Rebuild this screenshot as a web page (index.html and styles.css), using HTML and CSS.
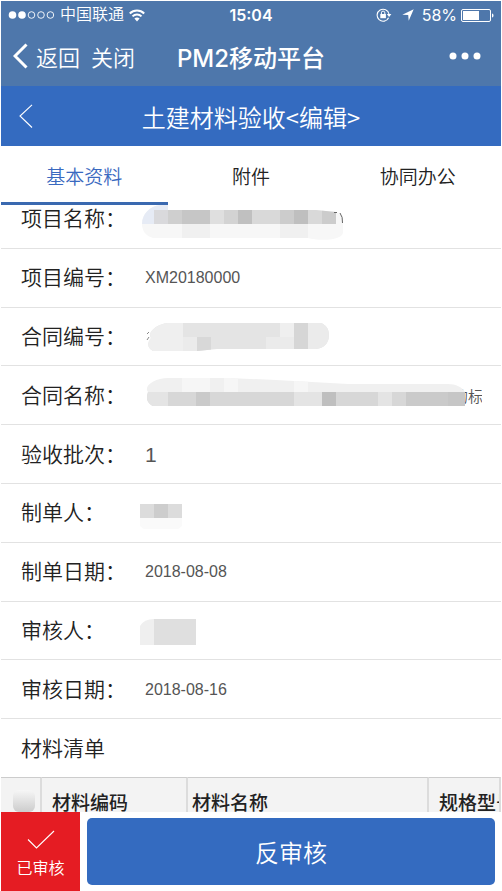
FILE: index.html
```html
<!DOCTYPE html>
<html lang="zh-CN">
<head>
<meta charset="utf-8">
<meta name="viewport" content="width=device-width, initial-scale=1">
<title>PM2移动平台</title>
<link rel="stylesheet" href="styles.css">
</head>
<body>
<div class="app">
  <header class="top">
    <div class="status">
      <div class="status-left">
        <svg width="47" height="10" viewBox="0 0 47 10" aria-hidden="true">
          <g fill="#fff"><circle cx="4.5" cy="5" r="3.8"/><circle cx="14" cy="5" r="3.8"/></g>
          <g fill="none" stroke="#fff" stroke-width="0.9"><circle cx="23.5" cy="5" r="3.3"/><circle cx="33" cy="5" r="3.3"/><circle cx="42.4" cy="5" r="3.3"/></g>
        </svg>
        <span class="carrier">中国联通</span>
        <svg width="16" height="13" viewBox="0 0 16 13" aria-hidden="true">
          <g fill="none" stroke="#fff" stroke-width="2"><path d="M.8 4.5C4.8.5 11.2.5 15.2 4.5"/><path d="M3.5 7.4c2.5-2.5 6.500-2.500 9 0"/></g>
          <path d="M5.400 9.600c1.500-1.500 3.700-1.500 5.200 0L8 12.500z" fill="#fff"/>
        </svg>
      </div>
      <span class="clock">15:04</span>
      <div class="status-right">
        <svg width="16" height="14" viewBox="0 0 16 14" aria-hidden="true">
          <path d="M12.600 9.700A6 6 0 1 1 13 6" fill="none" stroke="#fff" stroke-width="1.100"/>
          <path d="M10.800 6h4.600l-2.300 3z" fill="#fff"/>
          <rect x="4.300" y="6" width="5.600" height="4.200" fill="#fff"/>
          <path d="M5.400 6.200V4.800a1.700 1.700 0 0 1 3.400 0v1.400" fill="none" stroke="#fff"/>
        </svg>
        <svg class="arrow" width="12" height="12" viewBox="0 0 12 12" aria-hidden="true"><path d="M11.700.3 6.700 11.800 6.200 6.100.3 5.700z" fill="#fff"/></svg>
        <span>58%</span>
        <svg width="33" height="13" viewBox="0 0 33 13" aria-hidden="true">
          <rect x=".5" y=".5" width="29" height="12" rx="1.500" fill="none" stroke="#fff"/>
          <rect x="2" y="2" width="16" height="9" fill="#fff"/>
          <path d="M31 4.500c2 .5 2 3.500 0 4z" fill="#fff"/>
        </svg>
      </div>
    </div>
    <nav class="nav">
      <div class="nav-left">
        <button type="button" class="bare">
          <svg width="15" height="26" viewBox="0 0 15 26" aria-hidden="true"><path d="M13.500 1.500 2 13l11.500 11.500" fill="none" stroke="#fff" stroke-width="3"/></svg>
          返回</button>
        <button type="button" class="bare">关闭</button>
      </div>
      <h1 class="nav-title">PM2移动平台</h1>
      <button type="button" class="bare more" aria-label="更多">
        <svg width="32" height="8" viewBox="0 0 32 8" aria-hidden="true"><g fill="#fff"><circle cx="4" cy="4" r="3.500"/><circle cx="16" cy="4" r="3.500"/><circle cx="28" cy="4" r="3.500"/></g></svg>
      </button>
    </nav>
  </header>

  <div class="page-bar">
    <button type="button" class="bare" aria-label="返回">
      <svg width="14" height="24" viewBox="0 0 14 24" aria-hidden="true"><path d="M13 .8 1 12l12 11.500" fill="none" stroke="#fff" stroke-width="1.100"/></svg>
    </button>
    <h2 class="page-title">土建材料验收&lt;编辑&gt;</h2>
  </div>

  <div class="tabs" role="tablist">
    <button type="button" role="tab" class="tab active" aria-selected="true">基本资料</button>
    <button type="button" role="tab" class="tab" aria-selected="false">附件</button>
    <button type="button" role="tab" class="tab" aria-selected="false">协同办公</button>
  </div>

  <main class="content">
    <dl class="fields">
      <div class="field"><dt>项目名称：</dt><dd>
        <svg class="mask" width="204" height="44" viewBox="140 197 204 44" aria-hidden="true">
          <defs><clipPath id="m1"><path d="M168 205h-8c-10 1-18 9-18 19 0 7 4 12 11 14l60 0 95 0c10 3 33 3 35-5v-17l-7-4-20-2H168z"/></clipPath></defs>
          <g clip-path="url(#m1)">
            <path d="M140 200h204v44H140z" fill="#f7f7f7"/>
            <path d="M140 200h28v24h-28z" fill="#e6ebf5"/>
            <path d="M154 210h14v14h-14z" fill="#d9d9dc"/><path d="M168 210h14v14h-14z" fill="#cfcfcf"/><path d="M182 210h28v14h-28z" fill="#c6c6c6"/><path d="M210 210h14v14h-14z" fill="#dfdfdf"/><path d="M224 210h14v14h-14z" fill="#d3d3d3"/><path d="M238 210h14v14h-14z" fill="#c0c0c0"/><path d="M252 210h28v14h-28z" fill="#d9d9d9"/><path d="M280 210h14v14h-14z" fill="#ccc"/><path d="M294 210h14v14h-14z" fill="#bfbfbf"/><path d="M308 210h14v14h-14z" fill="#d9d9d9"/><path d="M322 210h14v14h-14z" fill="#ccc"/>
            <path d="M182 224h28v14h-28zM280 224h28v14h-28z" fill="#f0f0f0"/>
          </g>
          <path d="M334 212.500h3M340 213q3 4 2.500 10" fill="none" stroke="#666"/>
        </svg></dd></div>
      <div class="field"><dt>项目编号：</dt><dd><span class="value">XM20180000</span></dd></div>
      <div class="field"><dt>合同编号：</dt><dd>
        <svg class="mask" width="190" height="44" viewBox="140 314 190 44" aria-hidden="true">
          <defs><clipPath id="m3"><path d="M168 322h153c5 2 8 6 8 12 0 8-5 14-15 14H217l-20 2h-44c-6-3-6-8-2-13-4-6 6-14 17-15z"/></clipPath></defs>
          <g clip-path="url(#m3)">
            <path d="M140 320h190v32H140z" fill="#e4e4e4"/>
            <path d="M140 320h43v32h-43zM280 322h14v14h-14z" fill="#efefef"/>
            <path d="M183 336h14v16h-14zM266 336h28v14h-28zM308 322h22v28h-22z" fill="#ebebeb"/>
            <path d="M197 336h14v14h-14z" fill="#d8d8d8"/><path d="M294 322h14v28h-14z" fill="#d6d6d6"/>
          </g>
          <path d="M149 331l-2 2M149 336l-2 3" stroke="#888"/>
        </svg></dd></div>
      <div class="field"><dt>合同名称：</dt><dd>
        <svg class="mask" width="325" height="44" viewBox="140 374 325 44" aria-hidden="true">
          <defs><clipPath id="m4"><path d="M168 378h60l48 2 72 4h100c8 0 14 3 17 8v14H153c-6-3-7-8-5-14-5-6 7-14 20-14z"/></clipPath></defs>
          <g clip-path="url(#m4)">
            <path d="M140 376h325v16H140z" fill="#f0f0f0"/>
            <path d="M182 376h28v16h-28zM294 376h14v16h-14zM224 376h14v16h-14z" fill="#f6f6f6"/>
            <path d="M140 392h325v16H140z" fill="#d7d7d7"/>
            <path d="M140 392h28v16h-28zM294 392h28v16h-28zM378 392h14v16h-14z" fill="#e4e4e4"/>
            <path d="M196 392h14v16h-14zM406 392h42v16h-42z" fill="#cacaca"/>
            <path d="M322 392h14v16h-14z" fill="#bfbfbf"/><path d="M448 392h17v16h-17z" fill="#c6c6c6"/>
          </g>
        </svg><span class="tail">的标</span></dd></div>
      <div class="field"><dt>验收批次：</dt><dd><span class="value large">1</span></dd></div>
      <div class="field"><dt>制单人：</dt><dd>
        <svg class="mask" width="42" height="44" viewBox="140 491 42 44" aria-hidden="true">
          <path d="M140 504h42v14h-42z" fill="#dcdcdc"/><path d="M154 504h14v14h-14z" fill="#cdcdcd"/><path d="M140 518h42v8l-4 3h-34l-4-3z" fill="#fafafa"/>
        </svg></dd></div>
      <div class="field"><dt>制单日期：</dt><dd><span class="value">2018-08-08</span></dd></div>
      <div class="field"><dt>审核人：</dt><dd>
        <svg class="mask" width="56" height="44" viewBox="140 608 56 44" aria-hidden="true">
          <path d="M154 618h42v26h-42z" fill="#dfdfdf"/><path d="M154 618q-10 0-14 7v19h14z" fill="#efefef"/>
        </svg></dd></div>
      <div class="field"><dt>审核日期：</dt><dd><span class="value">2018-08-16</span></dd></div>
      <div class="field last"><dt>材料清单</dt></div>
    </dl>
    <div class="table-view">
      <table class="materials">
        <colgroup><col class="c-check"><col class="c-code"><col class="c-name"><col class="c-spec"></colgroup>
        <thead><tr>
          <th class="check-cell"><input type="checkbox" class="check" aria-label="全选"></th>
          <th class="code">材料编码</th><th class="name">材料名称</th><th class="code">规格型号</th>
        </tr></thead>
      </table>
    </div>
  </main>

  <footer class="actions">
    <div class="state">
      <svg width="28" height="20" viewBox="0 0 28 20" aria-hidden="true"><path d="M1 9.500 9.500 18 27 1" fill="none" stroke="#fff" stroke-width="1.100"/></svg>
      <span>已审核</span>
    </div>
    <button type="button" class="primary">反审核</button>
  </footer>
</div>
</body>
</html>
```
FILE: styles.css
```css
* { box-sizing: border-box; }
body {
  margin: 0;
  background: #fff;
  color: #222;
  font-family: "Liberation Sans", "Noto Sans CJK SC", sans-serif;
  font-weight: 350;
}
h1, h2, dl, dd { margin: 0; }
svg { display: block; flex: none; }
button { font: inherit; }

.app {
  display: flex;
  flex-direction: column;
  height: 100vh;
  padding: 1px 1px 0;
}

.bare {
  display: flex;
  align-items: center;
  gap: 8px;
  padding: 0;
  border: 0;
  background: none;
  color: inherit;
}

.top { background: #4e77ab; color: #fff; }
.status {
  display: grid;
  grid-template-columns: 1fr auto 1fr;
  align-items: center;
  height: 28px;
  padding: 0 7px;
  font-size: 16px;
  line-height: 28px;
}
.status-left, .status-right { display: flex; align-items: center; }
.status-left { gap: 5px; }
.status-right { justify-content: flex-end; gap: 4px; font-family: Inter, sans-serif; font-weight: 400; }
.arrow { margin: 0 4px 0 6px; }
.clock { font-family: Inter, sans-serif; font-weight: 600; }

.nav {
  display: grid;
  grid-template-columns: 1fr auto 1fr;
  align-items: center;
  height: 57px;
  padding: 0 12px;
}
.nav-left { display: flex; gap: 11px; padding-bottom: 3px; font-size: 22px; }
.nav-title { padding-bottom: 3px; font-family: Inter, "Noto Sans CJK SC", sans-serif; font-size: 24px; font-weight: 500; }
.more { justify-self: end; margin-right: 8px; padding-bottom: 3px; }

.page-bar {
  display: grid;
  grid-template-columns: 1fr auto 1fr;
  align-items: center;
  height: 60px;
  padding: 0 18px;
  background: #346bc0;
  color: #fff;
}
.page-title { font-family: "Noto Sans CJK SC", sans-serif; font-size: 24px; font-weight: 350; }

.tabs {
  display: grid;
  grid-template-columns: repeat(3, 1fr);
  height: 59px;
  flex: none;
  background: #fff;
}
.tab {
  padding: 2px 0 0;
  border: 0;
  border-bottom: 3px solid transparent;
  background: none;
  color: #222;
  font-size: 19px;
}
.tab.active { border-color: #3a69b0; color: #3a69c0; }

.content {
  display: flex;
  flex-direction: column;
  flex: 1;
  min-height: 0;
  overflow: hidden;
}
/* The list is scrolled slightly under the tabs */
.fields { display: flex; flex-direction: column; flex: 1; margin-top: -15px; }
.field {
  display: grid;
  grid-template-columns: 119px 1fr;
  align-items: center;
  flex: 1 0 0;
  padding: 1px 19px 0 20px;
  border-bottom: 1px solid #e2e2e2;
  overflow: hidden;
}
.field.last { border-bottom: 0; }
dt { font-size: 21px; line-height: 32px; white-space: nowrap; }
dd { display: flex; align-items: center; min-width: 0; overflow: hidden; }
.value { padding-left: 5px; color: #555; font-size: 16px; font-weight: 400; }
.value.large { font-size: 21px; }
.mask { position: relative; }
.tail { margin-left: -12px; color: #555; font-size: 15px; white-space: nowrap; }

.table-view { height: 35px; flex: none; overflow: hidden; }
.materials {
  width: 100%;
  table-layout: fixed;
  border-collapse: separate;
  border-spacing: 0;
  background: #f3f3f3;
}
.c-check { width: 41px; }
.c-code { width: 146px; }
.c-name { width: 241px; }
.materials th {
  height: 47px;
  padding: 0 0 0 4px;
  border-top: 1px solid #ccc;
  border-right: 2px solid #dcdcdc;
  font-size: 19px;
  font-weight: 500;
  text-align: left;
  white-space: nowrap;
  overflow: hidden;
}
.materials .code { padding-left: 10px; }
.materials .check-cell { padding: 0 0 0 12px; }
.check {
  appearance: none;
  display: block;
  width: 22px;
  height: 22px;
  margin: 0;
  border-radius: 6px;
  background: linear-gradient(#f6f6f6, #ccc);
}

.actions { display: flex; height: 79px; flex: none; }
.state {
  display: flex;
  flex-direction: column;
  align-items: center;
  justify-content: center;
  gap: 5px;
  width: 79px;
  padding-top: 5px;
  background: #e51c23;
  color: #fff;
  font-size: 16px;
}
.primary {
  flex: 1;
  margin: 6px 6px 6px 7px;
  border: 0;
  border-radius: 5px;
  background: #346bc0;
  color: #fff;
  font-size: 24px;
}
```
